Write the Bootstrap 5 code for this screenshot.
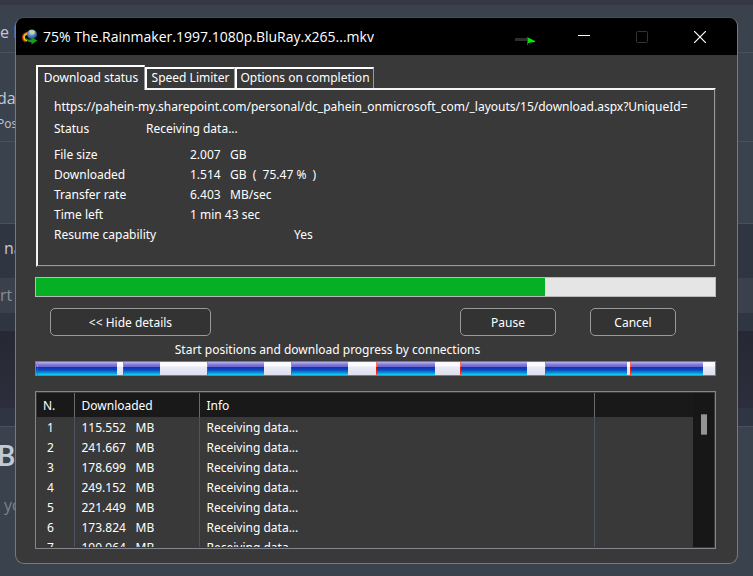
<!DOCTYPE html>
<html lang="en">
<head>
<meta charset="utf-8">
<meta name="viewport" content="width=device-width, initial-scale=1">
<title>75% The.Rainmaker.1997.1080p.BluRay.x265...mkv</title>
<link href="https://cdn.jsdelivr.net/npm/bootstrap@5.3.0/dist/css/bootstrap.min.css" rel="stylesheet">
<style>
body { background: #3a424d; font: 12px/20px "Noto Sans", sans-serif; color: #fff; }
.desktop { grid-template: minmax(100vh, auto) / minmax(0, 1fr); }
.desktop > * { grid-area: 1 / 1; }
/* page behind the dialog */
.backdrop { font: 16px/24px "Open Sans", sans-serif; color: #c3c9d6; overflow: hidden; background: #3a424d; white-space: nowrap; }
.band { border-bottom: 1px solid #4a505e; }
.b-top { height: 5px; background: #363945; }
.b-one { height: 48px; padding-top: 15px; }
.b-two { height: 89px; padding-top: 33px; }
.b-two > div { margin-left: -3px; }
.b-two small { font-size: 12px; }
.b-three { height: 82px; }
.b-four { height: 107px; background: #2f3642; padding-top: 12px; }
.b-field { background: #3a404c; color: #888d98; height: 35px; margin-top: 18px; line-height: 35px; }
.b-shade { height: 77px; background: linear-gradient(#262933, #2c2f3b); }
.b-five { height: 19px; background: #2f3543; }
.b-big { font-size: 28px; line-height: 56px; font-weight: 600; margin-left: -3px; }
.b-dim { color: #7d838e; line-height: 44px; }
/* dialog */
.dialog { margin: 17px 15px 12px; border: 1px solid #77797c; border-top-color: #4c4f55; border-radius: 9px; background: #393939; overflow: hidden; align-self: start; }
.titlebar { background: #000; height: 37px; padding-left: 5px; font: 14px/37px "Open Sans", sans-serif; }
.cap-btn { background: none; border: 0; padding: 0; width: 58px; height: 37px; }
.dialog-main { padding: 10px 21px 14px 19px; }
.tabs { padding-left: 1px; position: relative; }
.tab { background: #393939; color: #fff; border: solid #fff; border-width: 2px 1px 0 2px; border-right-color: #999; padding: 0 0 2px; height: 21px; line-height: 16px; white-space: nowrap; }
.tab.now { height: 25px; margin-bottom: -2px; line-height: 20px; }
.t-status { width: 109px; } .t-speed { width: 90px; } .t-opts { width: 139px; }
.pane { margin-left: 1px; border: 2px solid #f4f4f4; border-right: 2px ridge #999; border-bottom: 2px ridge #999; padding: 7px 16px 20px 16px; height: 179px; }
.status-row { margin: 2px 0 6px; }
.lab-s { width: 92px; }
.lab-m { width: 136px; }
.num { width: 40px; }
.lab-l { width: 240px; }
.total { height: 20px; border: 1px solid #bbb; border-radius: 0; background: #e5e5e5; margin-top: 10px; }
.total > div { background: #06b025; }
.push { height: 28px; border: 1px solid #9a9a9a; border-radius: 5px; background: #333; color: #fff; padding: 1px 0 0; }
.w-hide { width: 161px; } .w-pause { width: 96px; margin-right: 34px; } .w-cancel { width: 86px; }
.buttons { margin: 11px 40px 4px 15px; }
.caption-row { padding-right: 96px; }
.parts { height: 15px; border: 1px solid #737b8c; background: linear-gradient(#fafaff 0 30%, #e8e9f2 40%, #dde1ee); margin: 1px 0 15px; }
.run { background: linear-gradient(#b9b4ee 0, #7d77d6 22%, #6a66cc 36%, #1133b4 42%, #0e45c0 60%, #1086d8 80%, #12d6f0 100%); }
.mark-start { background: linear-gradient(#ff6a5a 40%, #d01010 41%, #ff4020); }
.list { height: 158px; border: 1px solid #83868f; padding: 1px; }
.conns { table-layout: fixed; }
.conns th { background: #191919; font-weight: 400; height: 24px; border-right: 1px solid #6b6b6b; padding: 2px 6px 0 7px; }
.conns td { height: 20px; line-height: 18px; border-right: 1px solid #4d5361; padding: 2px 6px 0 7px; white-space: nowrap; }
.conns th:last-child, .conns td:last-child { border-right: 0; }
.conns th:first-child { padding-left: 6px; }
.conns .amount { width: 54px; }
.c-n { width: 37px; } .c-d { width: 125px; } .c-i { width: 395px; }
.conns td.idx { padding-left: 10px; }
.rail { width: 21px; background: #171717; padding: 21px 7px 0 8px; }
.thumb { height: 21px; background: #949494; border: solid #6b6b6b; border-width: 1px 0; }
</style>
</head>
<body>
<div class="desktop d-grid">
  <div class="backdrop" aria-hidden="true">
    <div class="band b-top border-0"></div>
    <div class="band b-one">e I</div>
    <div class="band b-two"><div>da<br><small>Post</small></div></div>
    <div class="band b-three"></div>
    <div class="band b-four border-0"><div class="ps-1">name</div><div class="b-field">rt</div></div>
    <div class="b-shade"></div>
    <div class="band b-five"></div>
    <div class="b-big">B</div>
    <div class="b-dim ps-1">you</div>
  </div>

  <main class="dialog">
    <header class="titlebar d-flex align-items-center">
      <svg width="18" height="18" viewBox="0 0 18 18" class="me-1 flex-shrink-0" aria-hidden="true">
        <defs><radialGradient id="globe" cx=".45" cy=".3" r=".7"><stop offset="0" stop-color="#d4e6fb"/><stop offset=".45" stop-color="#5f90d6"/><stop offset="1" stop-color="#16336f"/></radialGradient></defs>
        <path d="M8 4Q2 5 1.500 9q0 3 2.500 5" fill="none" stroke="#a83212" stroke-width="1.500"/>
        <path d="M9 5Q3 6 3 9q0 3 3 4" fill="none" stroke="#e8c01c" stroke-width="1.800"/>
        <circle cx="11" cy="6.500" r="5" fill="url(#globe)"/>
        <path d="M8 2.500q4-1 6 1l-1 3-3-1z" fill="#cfd780"/>
        <path d="M4.500 9q1 3 6 2.500V9.500l6 3-6 4v-2q-6-1-6-5.500z" fill="#1c9a18"/>
      </svg>
      <span class="text-truncate me-auto">75% The.Rainmaker.1997.1080p.BluRay.x265...mkv</span>
      <svg width="24" height="8" viewBox="0 0 24 8" class="mt-2 flex-shrink-0" aria-hidden="true"><path d="M0 1h12v3H0z" fill="#2e2e2e"/><path d="M12 0l8 4v1l-7 1z" fill="#0be30b"/><path d="M12 0h1v8h-1z" fill="#087808"/><path d="M14 7.500l4-2" stroke="#064a06" stroke-dasharray="1 1"/></svg>
      <button class="cap-btn ms-3" aria-label="Minimize"><svg width="12" height="12" class="d-block mx-auto"><path d="M0 4.5h12" stroke="#fff"/></svg></button>
      <button class="cap-btn" aria-label="Maximize" disabled><svg width="12" height="12" class="d-block mx-auto"><rect x=".5" y=".5" width="11" height="11" rx="1" fill="none" stroke="#333"/></svg></button>
      <button class="cap-btn me-2" aria-label="Close"><svg width="12" height="12" class="d-block mx-auto"><path d="M0 0l12 12M12 0L0 12" stroke="#fff" stroke-width="1.2"/></svg></button>
    </header>

    <div class="dialog-main">
      <div class="tabs d-flex align-items-end" role="tablist">
        <button class="tab now t-status" role="tab" aria-selected="true">Download status</button>
        <button class="tab t-speed" role="tab">Speed Limiter</button>
        <button class="tab t-opts" role="tab">Options on completion</button>
      </div>
      <section class="pane">
        <div class="overflow-hidden text-nowrap">https://pahein-my.sharepoint.com/personal/dc_pahein_onmicrosoft_com/_layouts/15/download.aspx?UniqueId=</div>
        <div class="d-flex status-row"><span class="lab-s">Status</span><span>Receiving data...</span></div>
        <div class="d-flex"><span class="lab-m">File size</span><span class="num">2.007</span><span>GB</span></div>
        <div class="d-flex"><span class="lab-m">Downloaded</span><span class="num">1.514</span><span>GB&nbsp; (&nbsp; 75.47 %&nbsp; )</span></div>
        <div class="d-flex"><span class="lab-m">Transfer rate</span><span class="num">6.403</span><span>MB/sec</span></div>
        <div class="d-flex"><span class="lab-m">Time left</span><span>1 min 43 sec</span></div>
        <div class="d-flex"><span class="lab-l">Resume capability</span><span>Yes</span></div>
      </section>

      <div class="progress total" role="progressbar" aria-label="Download progress" aria-valuenow="75" aria-valuemin="0" aria-valuemax="100"><div style="width:75%"></div></div>

      <div class="buttons d-flex">
        <button class="push w-hide me-auto">&lt;&lt; Hide details</button>
        <button class="push w-pause">Pause</button>
        <button class="push w-cancel">Cancel</button>
      </div>

      <div class="caption-row text-center">Start positions and download progress by connections</div>
      <div class="parts d-flex" aria-hidden="true">
        <i class="run" style="flex:1 1 0"></i><i class="mark-start" style="flex:1 1 0"></i><i class="run" style="flex:79 1 0"></i><i style="flex:6 1 0"></i>
        <i class="mark-start" style="flex:1 1 0"></i><i class="run" style="flex:36 1 0"></i><i style="flex:47 1 0"></i>
        <i class="mark-start" style="flex:1 1 0"></i><i class="run" style="flex:56 1 0"></i><i style="flex:27 1 0"></i>
        <i class="mark-start" style="flex:1 1 0"></i><i class="run" style="flex:56 1 0"></i><i style="flex:28 1 0"></i>
        <i class="mark-start" style="flex:1 1 0"></i><i class="run" style="flex:58 1 0"></i><i style="flex:25 1 0"></i>
        <i class="mark-start" style="flex:1 1 0"></i><i class="run" style="flex:66 1 0"></i><i style="flex:18 1 0"></i>
        <i class="mark-start" style="flex:1 1 0"></i><i class="run" style="flex:81 1 0"></i><i style="flex:3 1 0"></i>
        <i class="mark-start" style="flex:1 1 0"></i><i class="run" style="flex:72 1 0"></i><i style="flex:12 1 0"></i>
      </div>

      <div class="list d-flex">
        <div class="flex-grow-1 overflow-hidden">
          <table class="conns w-100">
            <colgroup><col class="c-n"><col class="c-d"><col class="c-i"><col></colgroup>
            <thead><tr><th>N.</th><th>Downloaded</th><th>Info</th><th></th></tr></thead>
            <tbody>
              <tr><td class="idx">1</td><td><span class="amount d-inline-block">115.552</span>MB</td><td>Receiving data...</td><td></td></tr>
              <tr><td class="idx">2</td><td><span class="amount d-inline-block">241.667</span>MB</td><td>Receiving data...</td><td></td></tr>
              <tr><td class="idx">3</td><td><span class="amount d-inline-block">178.699</span>MB</td><td>Receiving data...</td><td></td></tr>
              <tr><td class="idx">4</td><td><span class="amount d-inline-block">249.152</span>MB</td><td>Receiving data...</td><td></td></tr>
              <tr><td class="idx">5</td><td><span class="amount d-inline-block">221.449</span>MB</td><td>Receiving data...</td><td></td></tr>
              <tr><td class="idx">6</td><td><span class="amount d-inline-block">173.824</span>MB</td><td>Receiving data...</td><td></td></tr>
              <tr><td class="idx">7</td><td><span class="amount d-inline-block">190.964</span>MB</td><td>Receiving data...</td><td></td></tr>
            </tbody>
          </table>
        </div>
        <div class="rail flex-shrink-0"><div class="thumb"></div></div>
      </div>
    </div>
  </main>
</div>
<script src="https://cdn.jsdelivr.net/npm/bootstrap@5.3.0/dist/js/bootstrap.bundle.min.js"></script>
</body>
</html>
